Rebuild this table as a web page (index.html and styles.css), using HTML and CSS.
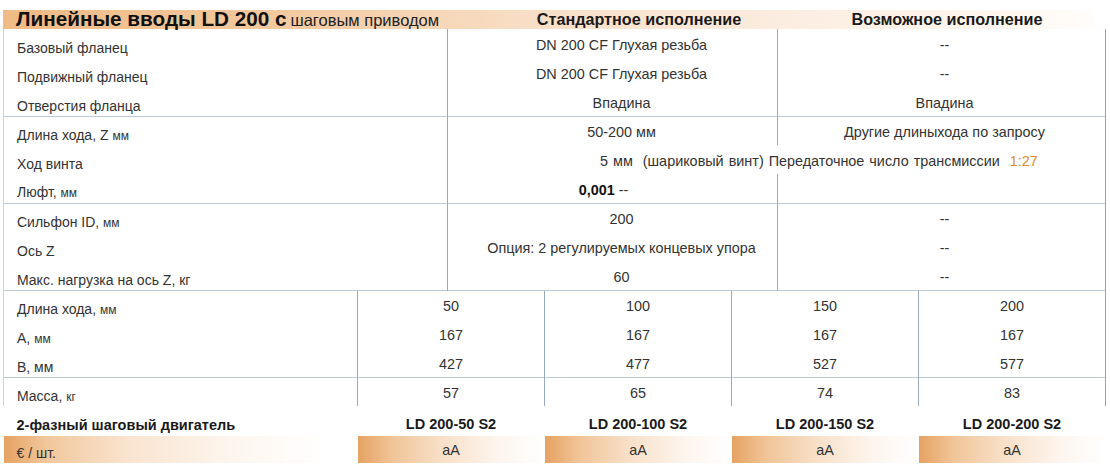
FILE: index.html
```html
<!DOCTYPE html>
<html lang="ru">
<head>
<meta charset="utf-8">
<title>Линейные вводы LD 200</title>
<link rel="stylesheet" href="styles.css">
</head>
<body>
<div class="page">
  <div class="head">
    <div class="head-title"><b>Линейные вводы LD 200 с</b> <span>шаговым приводом</span></div>
    <div class="head-std">Стандартное исполнение</div>
    <div class="head-opt">Возможное исполнение</div>
  </div>
  <table class="spec">
    <colgroup>
      <col class="c1"><col class="c2"><col class="c3"><col class="c4"><col class="c5"><col class="c6"><col class="c7">
    </colgroup>
    <tbody class="sec first">
      <tr><td class="lab" colspan="2">Базовый фланец</td><td class="val std" colspan="3">DN 200 CF Глухая резьба</td><td class="val opt" colspan="2">--</td></tr>
      <tr><td class="lab" colspan="2">Подвижный фланец</td><td class="val std" colspan="3">DN 200 CF Глухая резьба</td><td class="val opt" colspan="2">--</td></tr>
      <tr><td class="lab" colspan="2">Отверстия фланца</td><td class="val std" colspan="3">Впадина</td><td class="val opt" colspan="2">Впадина</td></tr>
    </tbody>
    <tbody class="sec">
      <tr><td class="lab" colspan="2">Длина хода, Z <small>мм</small></td><td class="val std" colspan="3">50-200 мм</td><td class="val opt" colspan="2">Другие длиныхода по запросу</td></tr>
      <tr><td class="lab" colspan="2">Ход винта</td><td class="val wide" colspan="5">5 мм &nbsp;(шариковый винт) Передаточное число трансмиссии &nbsp;<span class="accent">1:27</span></td></tr>
      <tr><td class="lab" colspan="2">Люфт, <small>мм</small></td><td class="val play" colspan="3"><b>0,001</b> --</td><td class="val opt" colspan="2"></td></tr>
    </tbody>
    <tbody class="sec">
      <tr><td class="lab" colspan="2">Сильфон ID, <small>мм</small></td><td class="val std" colspan="3">200</td><td class="val opt" colspan="2">--</td></tr>
      <tr><td class="lab" colspan="2">Ось Z</td><td class="val std" colspan="3">Опция: 2 регулируемых концевых упора</td><td class="val opt" colspan="2">--</td></tr>
      <tr><td class="lab" colspan="2">Макс. нагрузка на ось Z, кг</td><td class="val std" colspan="3">60</td><td class="val opt" colspan="2">--</td></tr>
    </tbody>
    <tbody class="sec">
      <tr><td class="lab">Длина хода, <small>мм</small></td><td class="val num" colspan="2">50</td><td class="val num">100</td><td class="val num" colspan="2">150</td><td class="val num">200</td></tr>
      <tr><td class="lab">A, <small>мм</small></td><td class="val num" colspan="2">167</td><td class="val num">167</td><td class="val num" colspan="2">167</td><td class="val num">167</td></tr>
      <tr><td class="lab">B, мм</td><td class="val num" colspan="2">427</td><td class="val num">477</td><td class="val num" colspan="2">527</td><td class="val num">577</td></tr>
    </tbody>
    <tbody class="sec">
      <tr><td class="lab">Масса, <small>кг</small></td><td class="val num" colspan="2">57</td><td class="val num">65</td><td class="val num" colspan="2">74</td><td class="val num">83</td></tr>
    </tbody>
    <tbody class="foot">
      <tr class="model"><td class="lab">2-фазный шаговый двигатель</td><td colspan="2">LD 200-50 S2</td><td>LD 200-100 S2</td><td colspan="2">LD 200-150 S2</td><td>LD 200-200 S2</td></tr>
      <tr class="price"><td class="lab">€ / шт.</td><td colspan="2">aA</td><td>aA</td><td colspan="2">aA</td><td>aA</td></tr>
    </tbody>
  </table>
</div>
</body>
</html>
```
FILE: styles.css
```css
* { box-sizing: border-box; }
html, body { margin: 0; padding: 0; background: #fff; }
body {
  font-family: "Liberation Sans", Arial, sans-serif;
  color: #333;
  font-size: 14px;
}
.page {
  padding: 10px 0 0 3px;
  width: 1106px;
}
.head {
  display: flex;
  align-items: center;
  height: 19px;
  width: 1092px;
  background: linear-gradient(to right, #efbb86 0%, #f3c99f 25%, #f8dec5 48%, #fbecdf 70%, #fff7f0 92%, #fffdfb 100%);
  color: #1a1a1a;
  white-space: nowrap;
}
.head-title {
  width: 444px;
  padding-left: 13px;
  line-height: 19px;
}
.head-title b {
  font-size: 20.7px;
  font-weight: bold;
  color: #111;
}
.head-title span {
  font-size: 16.5px;
  color: #222;
}
.head-std {
  width: 330px;
  padding-left: 54px;
  text-align: center;
  font-weight: bold;
  font-size: 16.2px;
}
.head-opt {
  width: 318px;
  padding-left: 22px;
  text-align: center;
  font-weight: bold;
  font-size: 16.2px;
}
.spec {
  border-collapse: collapse;
  table-layout: fixed;
  width: 1103px;
}
.c1 { width: 354px; }
.c2 { width: 90px; }
.c3 { width: 97px; }
.c4 { width: 187px; }
.c5 { width: 46px; }
.c6 { width: 141px; }
.c7 { width: 187px; }
.spec td {
  padding: 0;
  height: 29px;
  vertical-align: middle;
  white-space: nowrap;
  line-height: 16px;
}
.sec td {
  border-left: 1px solid #97abbb;
}
.sec td.lab {
  border-left: 1px solid #c9d3db;
}
.sec td:last-child {
  border-right: 1px solid #8fa5b5;
}
.sec tr:first-child td {
  border-top: 1px solid #bccad5;
}
.sec.first tr:first-child td {
  border-top: none;
}
.lab {
  padding: 9px 0 0 13px !important;
  text-align: left;
}
.lab small {
  font-size: 12px;
}
.val {
  padding: 3px 0 0 0 !important;
  text-align: center;
  font-size: 14.4px;
}
.val.std { padding-left: 18px !important; }
.val.opt { padding-left: 6px !important; }
.val.play { padding-right: 18px !important; }
.val.wide {
  text-align: left;
  padding-left: 152px !important;
  word-spacing: 1px;
}
.val b { color: #111; }
.accent { color: #e28a2c; }
.foot td {
  border: none;
  text-align: center;
}
.foot td.lab {
  text-align: left;
}
.model td {
  height: 30px;
  font-weight: bold;
  font-size: 14.5px;
  color: #1a1a1a;
  padding-top: 5px;
}
.model td.lab {
  padding-top: 8px !important;
}
.price td {
  height: 27px;
  padding-top: 0;
  font-size: 14.4px;
  background: linear-gradient(to right, #e6a262 0%, #f0c497 18%, #f8e0c8 45%, #fdf5ee 75%, #ffffff 100%);
}
.price td.lab {
  padding-top: 6px !important;
  font-size: 14px;
  background: linear-gradient(to right, #e6a262 0%, #f1c79c 12%, #f9e4cf 35%, #fdf6ef 65%, #ffffff 92%);
}
```
